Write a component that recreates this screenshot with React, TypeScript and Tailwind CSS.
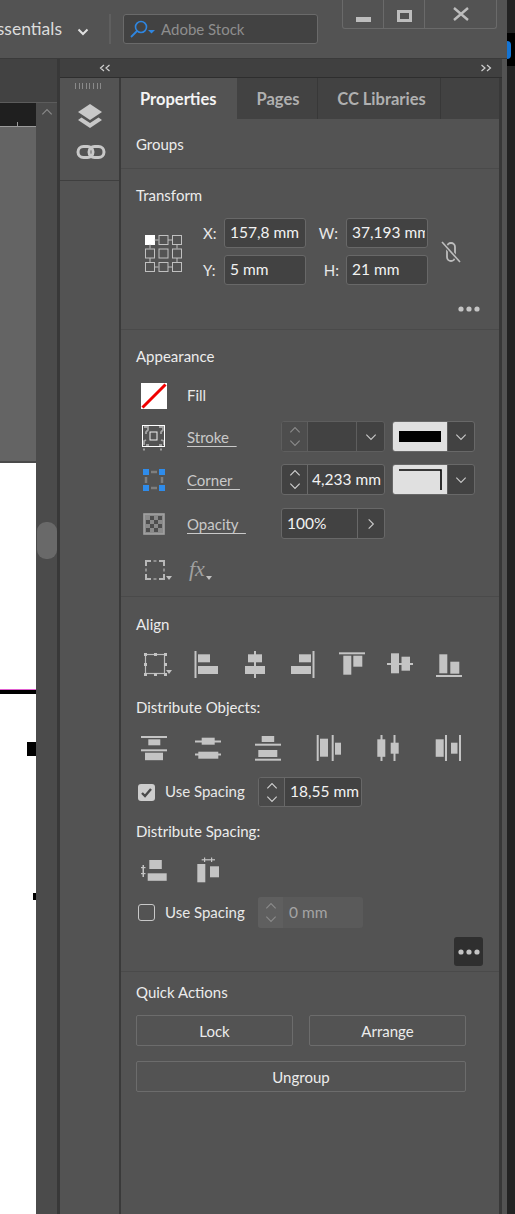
import React from "react";

type R = [number, number, number, number];

function Bars({ r, className = "" }: { r: R[]; className?: string }) {
  return (
    <svg width="28" height="28" viewBox="0 0 28 28" className={`shrink-0 ${className}`}>
      {r.map((a, i) => (
        <rect key={i} x={a[0]} y={a[1]} width={a[2]} height={a[3]} fill="#c4c4c4" />
      ))}
    </svg>
  );
}

const alignIcons: R[][] = [
  [[2.5, 1, 2, 27], [6, 4.3, 12, 8], [6, 16, 20, 8]],
  [[13, 1, 2, 27], [7, 4.3, 14, 8], [4, 16, 20, 8]],
  [[23.5, 1, 2, 27], [10, 4.3, 12, 8], [2, 16, 20, 8]],
  [[1, 2.3, 26, 2], [5.3, 5.7, 8, 19], [15.3, 5.7, 9, 11]],
  [[1, 13, 26, 2], [5, 3.3, 8, 20], [15.5, 6.7, 8.5, 14]],
  [[1, 25, 26, 2], [4.3, 4.3, 8, 19], [15.3, 11.7, 9, 12]],
];

const distIcons: R[][] = [
  [[1, 2, 26, 2], [8.3, 5.3, 12, 6], [1, 15.3, 26, 2], [5, 18.7, 18, 7.5]],
  [[1, 6.5, 26, 2], [7.7, 3.7, 13, 7], [1, 19.5, 26, 2], [4.3, 17.7, 20, 7]],
  [[7.7, 2, 12.5, 6], [1, 9.7, 26, 2], [4.3, 16, 19, 7], [1, 24.7, 26, 2]],
  [[2.7, 1, 2, 26], [6, 4.7, 8, 18], [17.7, 1, 2, 26], [21, 8.7, 6, 12]],
  [[6.5, 1, 2, 26], [3.3, 5.3, 8, 17.5], [19.5, 1, 2, 26], [16.7, 8.7, 8, 11]],
  [[1.7, 5.3, 8, 17.5], [11, 1, 2, 26], [17, 8.7, 6.5, 11], [25, 1, 2, 26]],
];

function Chevron({ dir = "down", size = 12, color = "#c8c8c8" }: { dir?: "down" | "up" | "right"; size?: number; color?: string }) {
  const d = dir === "down" ? "M2 4l4 4 4-4" : dir === "up" ? "M2 8l4-4 4 4" : "M4 2l4 4-4 4";
  return (
    <svg width={size} height={size} viewBox="0 0 12 12" fill="none" stroke={color} strokeWidth="1">
      <path d={d} />
    </svg>
  );
}

function Stepper({ disabled = false, className = "" }: { disabled?: boolean; className?: string }) {
  const c = disabled ? "#8a8a8a" : "#cfcfcf";
  return (
    <div className={`w-[25px] shrink-0 flex flex-col items-center justify-center -space-y-[1px] ${className}`}>
      <Chevron dir="up" size={14} color={c} />
      <Chevron dir="down" size={14} color={c} />
    </div>
  );
}

function Heading({ children, className = "" }: { children: React.ReactNode; className?: string }) {
  return <div className={`text-[#ececec] leading-[20px] ${className}`}>{children}</div>;
}

function Field({ value }: { value: string }) {
  return (
    <div className="w-[82px] h-[30px] bg-[#424242] border border-[#686868] rounded-[3px] pl-[5px] text-[15.5px] text-[#f2f2f2] leading-[26px]">
      <div className="w-[73px] overflow-hidden whitespace-nowrap">{value}</div>
    </div>
  );
}

function Dots({ color = "#c4c4c4" }: { color?: string }) {
  return (
    <svg width="22" height="6" viewBox="0 0 22 6">
      <circle cx="3" cy="3" r="2.6" fill={color} />
      <circle cx="11" cy="3" r="2.6" fill={color} />
      <circle cx="19" cy="3" r="2.6" fill={color} />
    </svg>
  );
}

function Swatch({ children }: { children: React.ReactNode }) {
  return (
    <div className="ml-[7px] w-[83px] h-[31px] flex border border-[#686868] rounded-[3px] overflow-hidden bg-[#424242]">
      <div className="w-[54px] bg-[#e0e0e0] flex items-center justify-center">{children}</div>
      <div className="flex-1 flex items-center justify-center border-l border-[#5e5e5e]">
        <Chevron size={14} />
      </div>
    </div>
  );
}

function PropLabel({ children }: { children: string }) {
  return (
    <span className="w-[94px] shrink-0 text-[#c9c9c9] underline underline-offset-[3px] whitespace-pre leading-[20px]">{children}</span>
  );
}

function Tri({ className = "" }: { className?: string }) {
  return <span className={`w-0 h-0 border-x-[3px] border-x-transparent border-t-[4px] border-t-[#c0c0c0] ${className}`} />;
}

function FrameGaps() {
  return (
    <svg width="22" height="22" viewBox="0 0 22 22" fill="none" stroke="#b8b8b8" strokeWidth="2" className="shrink-0">
      <path d="M2 7V2h5M15 2h5v5M20 15v5h-5M7 20H2v-5" />
      <path d="M9.5 2h3M9.5 20h3M2 9.5v3M20 9.5v3" stroke="#8e8e8e" />
    </svg>
  );
}

function FrameHandles() {
  const pts = [1, 11, 21];
  return (
    <svg width="24" height="24" viewBox="0 0 24 24" fill="none" className="shrink-0">
      <rect x="2.5" y="2.5" width="19" height="19" stroke="#bcbcbc" strokeWidth="1.2" />
      {pts.map((x) => pts.map((y) => (x === 11 && y === 11 ? null : <rect key={`${x}-${y}`} x={x} y={y} width="3" height="3" fill="#c4c4c4" />)))}
    </svg>
  );
}

function Btn({ children, className = "" }: { children: string; className?: string }) {
  return (
    <div className={`h-[31px] pt-[1px] border border-[#6c6c6c] rounded-[2px] flex items-center justify-center text-[#ececec] ${className}`}>{children}</div>
  );
}

export default function App() {
  return (
    <div
      className="w-[515px] h-[1214px] overflow-hidden flex bg-[#232323] text-[15px]"
      style={{ fontFamily: '"Lato", "Noto Sans", sans-serif' }}
    >
      <div className="w-[507px] shrink-0 flex flex-col bg-[#535353]">
        {/* title bar */}
        <div className="h-[59px] shrink-0 flex items-start relative border-b border-[#3a3a3a]">
          <div className="mt-[16px] w-[62px] flex justify-end text-[17.5px] leading-[26px] text-[#dcdcdc]">ssentials</div>
          <svg width="14" height="14" viewBox="0 0 14 14" fill="none" stroke="#e0e0e0" strokeWidth="2" className="ml-[14px] mt-[25px]">
            <path d="M2.5 4.5L7 9l4.5-4.5" />
          </svg>
          <div className="ml-[19px] mt-[14px] w-[2px] h-[30px] bg-[#5f5f5f]" />
          <div className="ml-[12px] mt-[14px] w-[195px] h-[30px] bg-[#424242] border border-[#6a6a6a] rounded-[3px] flex items-center">
            <svg width="28" height="20" viewBox="0 0 28 20" fill="none" className="ml-[5px] shrink-0">
              <circle cx="12" cy="8" r="5.5" stroke="#2f86e0" strokeWidth="1.6" />
              <path d="M8 12l-6 6" stroke="#2f86e0" strokeWidth="1.8" />
              <path d="M19 11h7l-3.5 3.5z" fill="#2f86e0" />
            </svg>
            <span className="ml-[4px] text-[#8e8e8e] text-[15px]">Adobe Stock</span>
          </div>
          <div className="ml-[24px] w-[155px] h-[29px] border border-t-0 border-[#6a6a6a] rounded-b-[3px] flex">
            <div className="w-[41px] flex items-center justify-center border-r border-[#6a6a6a]">
              <div className="w-[15px] h-[5px] bg-[#bdbdbd] mt-[10px]" />
            </div>
            <div className="w-[41px] flex items-center justify-center border-r border-[#6a6a6a]">
              <div className="w-[15px] h-[12px] border-[3px] border-[#bdbdbd] mt-[3px]" />
            </div>
            <div className="flex-1 flex items-center justify-center">
              <svg width="16" height="14" viewBox="0 0 16 14" stroke="#bdbdbd" strokeWidth="2.4">
                <path d="M1 1l14 12M15 1L1 13" />
              </svg>
            </div>
          </div>
        </div>

        {/* body */}
        <div className="flex-1 flex min-h-0">
          {/* document area */}
          <div className="w-[57px] shrink-0 flex flex-col bg-[#4b4b4b]">
            <div className="h-[44px] shrink-0 bg-[#424242] border-b border-[#5c5c5c]" />
            <div className="flex-1 flex min-h-0">
              <div className="w-[36px] shrink-0 flex flex-col">
                <div className="h-[24px] shrink-0 bg-[#1f1f1f] border-b border-[#9a9a9a] flex justify-end pr-[18px]">
                  <div className="w-px h-[4px] self-end bg-[#9a9a9a]" />
                </div>
                <div className="h-[336px] shrink-0 bg-[#646464] border-b-2 border-[#4a4a4a]" />
                <div className="flex-1 bg-white flex flex-col items-end">
                  <div className="w-full h-[5px] mt-[226px] bg-black border-t border-[#e060d0]" />
                  <div className="w-[9px] h-[14px] mt-[48px] bg-black" />
                  <div className="w-[3px] h-[7px] mt-[137px] bg-black" />
                </div>
              </div>
              <div className="flex-1 flex flex-col items-center">
                <div className="mt-[2px]"><Chevron dir="up" size={14} color="#8a8a8a" /></div>
                <div className="ml-[1px] mt-[403px] w-[20px] h-[37px] rounded-[9px] bg-[#696969]" />
              </div>
            </div>
          </div>

          {/* panel dock */}
          <div className="w-[445px] shrink-0 flex flex-col border-l-[3px] border-[#383838]">
            <div className="h-[19px] shrink-0 bg-[#404040] border-b border-[#2e2e2e] flex items-center justify-between pl-[39px] pr-[10px]">
              <svg width="12" height="8" viewBox="0 0 12 8" fill="none" stroke="#d0d0d0" strokeWidth="1.2"><path d="M5 1L1.5 4 5 7M10.5 1L7 4l3.5 3" /></svg>
              <svg width="12" height="8" viewBox="0 0 12 8" fill="none" stroke="#d0d0d0" strokeWidth="1.2"><path d="M1.5 1L5 4 1.5 7M7 1l3.5 3L7 7" /></svg>
            </div>
            <div className="flex-1 flex min-h-0">
              {/* icon dock */}
              <div className="w-[61px] shrink-0 flex flex-col items-center border-r-2 border-[#3a3a3a]">
                <div className="h-[103px] w-full shrink-0 flex flex-col items-center border-b border-[#3f3f3f]">
                  <div className="mt-[5px] w-[29px] h-[6px] bg-[repeating-linear-gradient(90deg,#8a8a8a_0_1px,transparent_1px_3.6px)]" />
                  <svg width="26" height="28" viewBox="0 0 26 28" className="mt-[14px] ml-[1px]" fill="#c8c8c8">
                    <path d="M13 1l12 8-12 8-12-8z" />
                    <path d="M4.5 14.5L13 20l8.5-5.5 3.5 2.5-12 8-12-8z" />
                  </svg>
                  <svg width="30" height="18" viewBox="0 0 30 18" fill="none" stroke="#c8c8c8" strokeWidth="3" className="mt-[12px] ml-[2px]">
                    <rect x="2" y="3.5" width="15" height="11" rx="5.5" />
                    <rect x="13" y="3.5" width="15" height="11" rx="5.5" />
                  </svg>
                </div>
              </div>

              {/* properties panel */}
              <div className="w-[378px] shrink-0 flex flex-col">
                {/* tabs */}
                <div className="h-[41px] shrink-0 flex bg-[#424242] font-bold text-[16.5px]">
                  <div className="w-[116px] bg-[#535353] flex items-center pl-[19px] pt-[1px] text-[#f4f4f4]">Properties</div>
                  <div className="w-[81px] border-r border-[#383838] flex items-center justify-center pl-[2px] pt-[1px] text-[#b0b0b0]">Pages</div>
                  <div className="w-[123px] border-r border-[#383838] flex items-center justify-center pl-[5px] pt-[1px] text-[#b0b0b0]">CC Libraries</div>
                </div>

                {/* Groups */}
                <div className="h-[50px] shrink-0 px-[15px] pt-[15px] border-b border-[#4a4a4a]">
                  <Heading>Groups</Heading>
                </div>

                {/* Transform */}
                <div className="h-[161px] shrink-0 px-[15px] pt-[16px] border-b border-[#4a4a4a] flex flex-col">
                  <Heading>Transform</Heading>
                  <div className="mt-[13px] flex items-center">
                    <svg width="40" height="40" viewBox="0 0 40 40" className="ml-[7px] shrink-0" fill="none" stroke="#c0c0c0">
                      {[0, 1, 2].map((r) =>
                        [0, 1, 2].map((c) => (
                          <rect key={`${r}${c}`} x={2.5 + c * 13.5} y={3.5 + r * 13.5} width="9" height="9" fill={r + c === 0 ? "#ffffff" : "none"} stroke={r + c === 0 ? "#ffffff" : "#c0c0c0"} />
                        ))
                      )}
                      <path d="M11.5 8h4M25 8h4M11.5 35h4M25 35h4M7 12.5v4M7 26v4M34 12.5v4M34 26v4" />
                    </svg>
                    <div className="ml-[20px] grid grid-cols-[21px_82px_40px_82px] gap-y-[7px] items-center text-[#e8e8e8]">
                      <span>X:</span>
                      <Field value="157,8 mm" />
                      <span className="text-right pr-[8px]">W:</span>
                      <Field value="37,193 mm" />
                      <span>Y:</span>
                      <Field value="5 mm" />
                      <span className="text-right pr-[7px]">H:</span>
                      <Field value="21 mm" />
                    </div>
                    <svg width="22" height="24" viewBox="0 0 22 24" fill="none" stroke="#bdbdbd" strokeWidth="2" className="ml-[12px] shrink-0">
                      <rect x="7" y="3" width="8" height="18" rx="4" strokeWidth="1.8" />
                      <path d="M2 2l18 20" stroke="#535353" strokeWidth="4" />
                      <path d="M2 2l18 20" strokeWidth="1.6" />
                    </svg>
                  </div>
                  <div className="mt-[21px] flex justify-end pr-[4px]"><Dots /></div>
                </div>

                {/* Appearance */}
                <div className="h-[267px] shrink-0 px-[15px] pt-[16px] border-b border-[#4a4a4a] flex flex-col">
                  <Heading>Appearance</Heading>
                  <div className="mt-[17px] flex items-center h-[26px]">
                    <svg width="26" height="26" viewBox="0 0 26 26" className="ml-[5px] mr-[20px] shrink-0">
                      <rect width="26" height="26" fill="#ffffff" />
                      <path d="M1.5 24.5L24.5 1.5" stroke="#f00000" strokeWidth="3" />
                    </svg>
                    <span className="text-[#e8e8e8] -mt-[2px]">Fill</span>
                  </div>
                  <div className="mt-[12px] flex items-center h-[31px]">
                    <svg width="26" height="28" viewBox="0 0 26 28" className="ml-[5px] mr-[20px] shrink-0" fill="none">
                      <path d="M3 4h4v3l-2 2v2M22 4h-4M18 4h4v3l-2 2v2M3 22v-4l2-1M23 22v-4l-3-1M8 22H5M18 22h3" stroke="#a4a4a4" strokeWidth="1.8" />
                      <rect x="1.5" y="2.5" width="22" height="21" stroke="#ffffff" strokeWidth="1" />
                      <rect x="9" y="9" width="7" height="8" stroke="#f0f0f0" strokeWidth="1" />
                      <rect x="2" y="25.5" width="2" height="2" fill="#9c9c9c" />
                      <rect x="19" y="25.5" width="2" height="2" fill="#9c9c9c" />
                    </svg>
                    <PropLabel>{"Stroke  "}</PropLabel>
                    <div className="w-[104px] h-[31px] flex border border-[#5e5e5e] rounded-[3px] overflow-hidden bg-[#424242]">
                      <Stepper disabled className="bg-[#4d4d4d]" />
                      <div className="flex-1 border-l border-r border-[#5e5e5e]" />
                      <div className="w-[27px] flex items-center justify-center"><Chevron size={14} /></div>
                    </div>
                    <Swatch><div className="w-[42px] h-[11px] bg-black" /></Swatch>
                  </div>
                  <div className="mt-[12px] flex items-center h-[31px]">
                    <svg width="22" height="22" viewBox="0 0 22 22" className="ml-[7px] mr-[22px] shrink-0">
                      <path d="M8 3h6M8 19h6M3 8v6M19 8v6" stroke="#7e7e7e" strokeWidth="2.5" />
                      <g fill="#2f8ceb">
                        <rect x="0" y="0" width="6" height="6" /><rect x="16" y="0" width="6" height="6" />
                        <rect x="0" y="16" width="6" height="6" /><rect x="16" y="16" width="6" height="6" />
                      </g>
                    </svg>
                    <PropLabel>{"Corner  "}</PropLabel>
                    <div className="w-[104px] h-[31px] flex border border-[#686868] rounded-[3px] overflow-hidden bg-[#424242]">
                      <Stepper />
                      <div className="flex-1 border-l border-[#686868] flex items-center pl-[4px] text-[15.5px] text-[#f2f2f2] whitespace-nowrap">4,233 mm</div>
                    </div>
                    <Swatch>
                      <svg width="46" height="24" viewBox="0 0 46 24" fill="none" stroke="#000000" strokeWidth="1.6"><path d="M2 2h42v20" /></svg>
                    </Swatch>
                  </div>
                  <div className="mt-[13px] flex items-center h-[31px]">
                    <svg width="22" height="22" viewBox="0 0 22 22" className="ml-[7px] mr-[22px] shrink-0">
                      <rect x="1" y="1" width="20" height="20" fill="#8a8a8a" stroke="#a2a2a2" strokeWidth="1.6" />
                      <g fill="#4e4e4e">
                        <rect x="7" y="3" width="4" height="4" /><rect x="15" y="3" width="4" height="4" />
                        <rect x="3" y="7" width="4" height="4" /><rect x="11" y="7" width="4" height="4" />
                        <rect x="7" y="11" width="4" height="4" /><rect x="15" y="11" width="4" height="4" />
                        <rect x="3" y="15" width="4" height="4" /><rect x="11" y="15" width="4" height="4" />
                      </g>
                    </svg>
                    <PropLabel>{"Opacity  "}</PropLabel>
                    <div className="w-[104px] h-[31px] flex border border-[#686868] rounded-[3px] overflow-hidden bg-[#424242]">
                      <div className="flex-1 flex items-center pl-[5px] text-[15.5px] text-[#f2f2f2]">100%</div>
                      <div className="w-[27px] border-l border-[#686868] flex items-center justify-center"><Chevron dir="right" size={14} /></div>
                    </div>
                  </div>
                  <div className="mt-[18px] flex items-end h-[24px] pl-[8px]">
                    <FrameGaps />
                    <Tri className="mb-[1px]" />
                    <span className="ml-[17px] text-[22px] leading-[24px] italic text-[#a0a0a0]" style={{ fontFamily: '"Liberation Serif", serif' }}>fx</span>
                    <Tri className="mb-[1px] ml-[1px]" />
                  </div>
                </div>

                {/* Align */}
                <div className="h-[375px] shrink-0 px-[15px] pt-[17px] border-b border-[#4a4a4a] flex flex-col">
                  <Heading>Align</Heading>
                  <div className="mt-[16px] flex items-center h-[28px] gap-[20.5px] pl-[7px]">
                    <div className="flex items-center w-[41px] h-[28px] -mr-[20.5px]">
                      <FrameHandles />
                      <Tri className="-ml-[1px] mt-[16px]" />
                      <div className="ml-[14px] w-px h-[28px] bg-[#5f5f5f]" />
                    </div>
                    {alignIcons.map((r, i) => (
                      <Bars key={i} r={r} className={i === 0 ? "ml-[8px]" : ""} />
                    ))}
                  </div>
                  <Heading className="mt-[19px]">Distribute Objects:</Heading>
                  <div className="mt-[17px] flex items-center h-[28px] gap-[32px] pl-[4px]">
                    {distIcons.map((r, i) => (
                      <Bars key={i} r={r} className={i === 1 ? "-ml-[6px]" : ""} />
                    ))}
                  </div>
                  <div className="mt-[15px] flex items-center h-[30px]">
                    <div className="ml-[2px] w-[17px] h-[17px] rounded-[3px] bg-[#cdcdcd] flex items-center justify-center">
                      <svg width="13" height="13" viewBox="0 0 13 13" fill="none" stroke="#4a4a4a" strokeWidth="2.4"><path d="M2 7l3 3 6-7" /></svg>
                    </div>
                    <span className="ml-[10px] w-[93px] -mt-[2px] text-[#e8e8e8]">Use Spacing</span>
                    <div className="w-[104px] h-[30px] flex border border-[#686868] rounded-[3px] overflow-hidden bg-[#424242]">
                      <Stepper className="bg-[#4a4a4a]" />
                      <div className="flex-1 border-l border-[#686868] flex items-center pl-[5px] text-[15.5px] text-[#f2f2f2] whitespace-nowrap">18,55 mm</div>
                    </div>
                  </div>
                  <Heading className="mt-[14px]">Distribute Spacing:</Heading>
                  <div className="mt-[15px] flex items-center h-[28px] gap-[26px] pl-[4px]">
                    <Bars r={[[9.3, 4, 12.5, 9], [7.7, 17.3, 19, 7.5], [2.5, 9, 1.5, 12], [1, 11, 4.5, 1.2], [1, 17, 4.5, 1.2]]} />
                    <Bars r={[[3.3, 8, 8, 18.3], [16, 10.3, 9, 11], [7.7, 3.2, 13.3, 1.2], [10, 1.5, 1.2, 4.5], [17, 1.5, 1.2, 4.5]]} />
                  </div>
                  <div className="mt-[13px] flex items-center h-[31px]">
                    <div className="ml-[2px] w-[17px] h-[17px] rounded-[3px] border border-[#c8c8c8]" />
                    <span className="ml-[10px] w-[93px] text-[#e8e8e8]">Use Spacing</span>
                    <div className="w-[105px] h-[31px] flex rounded-[3px] overflow-hidden bg-[#5a5a5a]">
                      <Stepper disabled className="bg-[#5f5f5f]" />
                      <div className="flex-1 flex items-center pl-[6px] text-[15.5px] text-[#a4a4a4]">0 mm</div>
                    </div>
                  </div>
                  <div className="mt-[9px] flex justify-end pr-[1px]">
                    <div className="w-[29px] h-[29px] rounded-[3px] bg-[#2f2f2f] flex items-center justify-center"><Dots /></div>
                  </div>
                </div>

                {/* Quick Actions */}
                <div className="flex-1 px-[15px] pt-[10px] flex flex-col">
                  <Heading>Quick Actions</Heading>
                  <div className="mt-[13px] w-[330px] grid grid-cols-2 gap-x-[16px] gap-y-[15px]">
                    <Btn>Lock</Btn>
                    <Btn>Arrange</Btn>
                    <Btn className="col-span-2">Ungroup</Btn>
                  </div>
                </div>
              </div>
              <div className="flex-1 bg-[#383838]" />
            </div>
          </div>
        </div>
      </div>

      {/* right strip */}
      <div className="flex-1 flex flex-col bg-[#232323]">
        <div className="mt-[33px] h-[33px] bg-black flex items-center">
          <div className="w-[4px] h-[18px] bg-[#1474d4] rounded-r-full" />
        </div>
      </div>
    </div>
  );
}
